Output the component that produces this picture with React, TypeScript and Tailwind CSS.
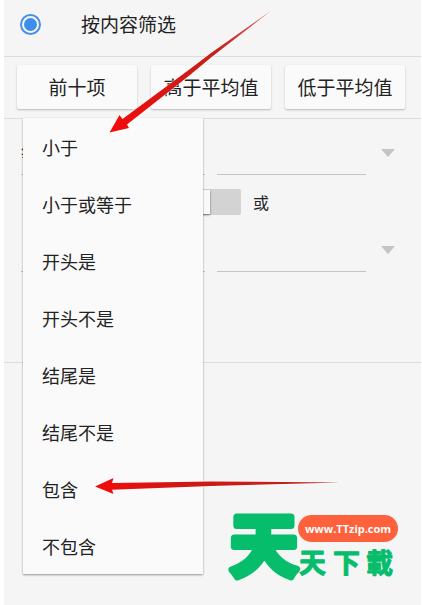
import { useState } from "react";

const quickFilters = ["前十项", "高于平均值", "低于平均值"];

const conditions = [
  "小于",
  "小于或等于",
  "开头是",
  "开头不是",
  "结尾是",
  "结尾不是",
  "包含",
  "不包含",
];

function ConditionRow({ id, value }: { id: string; value: string }) {
  return (
    <div className="flex h-11 items-stretch">
      <select
        aria-label={`条件 ${id}`}
        className="w-[184px] shrink-0 appearance-none border-b border-[#c4c4c4] bg-transparent text-lg outline-none"
      >
        <option>{value}</option>
      </select>
      <input
        type="text"
        aria-label={`值 ${id}`}
        className="ml-3 min-w-0 flex-1 border-b border-[#c4c4c4] bg-transparent text-lg outline-none"
      />
      <button type="button" aria-label={`选择值 ${id}`} className="flex w-11 items-center justify-center">
        <svg width="14" height="8" viewBox="0 0 14 8" aria-hidden="true">
          <path d="M0 0H14L7 8Z" fill="#c4c4c4" />
        </svg>
      </button>
    </div>
  );
}

function ConditionMenu() {
  return (
    <ul
      role="menu"
      className="absolute -top-px left-[19px] w-[180px] bg-[#fafafa] shadow-[0_1px_2px_rgba(0,0,0,0.4)]"
    >
      {conditions.map((name) => (
        <li key={name} role="none">
          <button type="button" role="menuitem" className="h-[57px] w-full px-[19px] text-left text-lg">
            {name}
          </button>
        </li>
      ))}
    </ul>
  );
}

function Arrows() {
  return (
    <svg
      className="pointer-events-none absolute top-0 left-0"
      width="422"
      height="605"
      viewBox="0 0 422 605"
      aria-hidden="true"
    >
      <defs>
        <linearGradient id="redA" gradientUnits="userSpaceOnUse" x1="110" y1="132" x2="272" y2="10">
          <stop offset="0" stopColor="#f30b0b" />
          <stop offset="0.3" stopColor="#dd1512" />
          <stop offset="0.65" stopColor="#c4211c" />
          <stop offset="1" stopColor="#e05a57" />
        </linearGradient>
        <linearGradient id="redB" gradientUnits="userSpaceOnUse" x1="96" y1="486" x2="341" y2="482">
          <stop offset="0" stopColor="#f30b0b" />
          <stop offset="0.35" stopColor="#d01815" />
          <stop offset="1" stopColor="#b9231f" />
        </linearGradient>
      </defs>
      <g stroke="#ffffff" strokeOpacity="0.5" strokeWidth="2" paintOrder="stroke" strokeLinejoin="round">
        <path
          d="M109.500 132.500L119.500 115L122.500 119L190 69L211 53L272 10L211 57.500L190 75L127 124.500L129 128Z"
          fill="url(#redA)"
        />
        <path d="M95 486.500L113.500 478L112 483L211 481.500L341 482.500L211 486L112 489.800L113.500 494Z" fill="url(#redB)" />
      </g>
    </svg>
  );
}

function Logo() {
  return (
    <svg
      className="absolute right-[22px] bottom-0"
      width="172"
      height="112"
      viewBox="0 0 172 112"
      fontFamily="'Noto Sans CJK TC', sans-serif"
      fontWeight="700"
    >
      <g fill="#06bd6b" stroke="#06bd6b" strokeLinejoin="round">
        <text x="2" y="78" fontSize="68" strokeWidth="7">
          天
        </text>
        <g fontSize="27" strokeWidth="1">
          <text x="71" y="80">
            天
          </text>
          <text x="105" y="80">
            下
          </text>
          <text x="138" y="80">
            載
          </text>
        </g>
      </g>
      <rect x="70" y="22" width="100" height="27" rx="13.500" fill="#fe613c" />
      <text x="120" y="40" fontSize="11" textAnchor="middle" fill="#ffffff" fontFamily="'Open Sans', sans-serif">
        www.TTzip.com
      </text>
    </svg>
  );
}

export default function App() {
  const [either, setEither] = useState(false);

  return (
    <div className="relative min-h-screen bg-white pr-px pl-1 font-['Noto_Sans_CJK_SC',sans-serif] text-[#222222]">
      <main className="min-h-screen bg-[#f5f5f5]">
        <label className="flex h-[57px] items-center border-b border-[#dcdcdc] pb-2 pl-4">
          <input
            type="radio"
            name="filter"
            defaultChecked
            className="size-[21px] appearance-none rounded-full border-2 border-[#4a90e2] bg-[#3b8eea] bg-clip-content p-[2px]"
          />
          <span className="ml-10 text-[19px]">按内容筛选</span>
        </label>

        <div className="flex gap-[14px] border-b border-[#dcdcdc] pt-2 pr-4 pb-[9px] pl-[13px]">
          {quickFilters.map((name) => (
            <button
              key={name}
              type="button"
              className="h-11 min-w-0 flex-1 rounded-xs bg-[#fafafa] text-[19px] whitespace-nowrap shadow-[0_1px_2px_rgba(0,0,0,0.25)]"
            >
              {name}
            </button>
          ))}
        </div>

        <section className="relative">
          <div className="border-b border-[#dcdcdc] pt-3 pr-[11px] pb-[90px] pl-[17px]">
            <ConditionRow id="1" value="等于" />
            <label className="flex h-[53px] items-center pl-40">
              <input
                type="checkbox"
                role="switch"
                checked={either}
                onChange={(e) => setEither(e.target.checked)}
                className="peer sr-only"
              />
              <span className="flex h-[26px] w-[60px] rounded-xs bg-[#d3d3d3] p-px peer-checked:justify-end">
                <span className="w-7 bg-[#fafafa] shadow-[0_1px_2px_rgba(0,0,0,0.5)]" />
              </span>
              <span className="ml-3 text-base">或</span>
            </label>
            <ConditionRow id="2" value="" />
          </div>
          <ConditionMenu />
        </section>
      </main>

      <Logo />
      <Arrows />
    </div>
  );
}
